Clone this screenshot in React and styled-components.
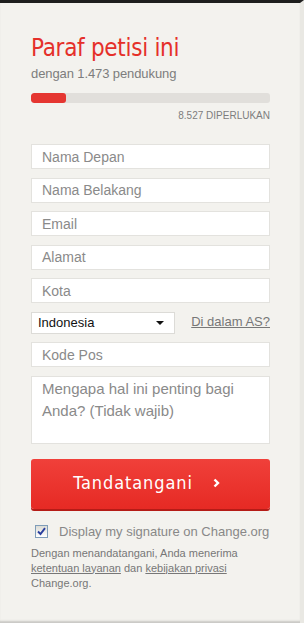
import React from 'react';
import styled, { createGlobalStyle } from 'styled-components';

const GlobalStyle = createGlobalStyle`
  html, body { margin: 0; padding: 0; background: #ffffff; }
  body { font-family: "Liberation Sans", Arial, sans-serif; }
  * { box-sizing: border-box; }
`;

const Panel = styled.div`
  width: 304px;
  height: 623px;
  background: #f3f2ee;
  border-top: 3px solid #1e1e1e;
  border-right: 4px solid #e9e8e3;
  box-shadow: inset 0 -3px 2px -1px #c9c8c4;
  padding: 30px 30px 0 31px;
  display: flex;
  flex-direction: column;
`;

const Title = styled.h1`
  margin: 0;
  font-family: "DejaVu Sans Condensed", "Liberation Sans Narrow", sans-serif;
  font-weight: normal;
  font-size: 24px;
  line-height: 30px;
  color: #e5302a;
  letter-spacing: -0.3px;
`;

const Subtitle = styled.p`
  margin: 3px 0 0;
  font-size: 13px;
  line-height: 16px;
  color: #7d7d7d;
  letter-spacing: -0.1px;
`;

const Track = styled.div`
  margin-top: 11px;
  height: 10px;
  border-radius: 3px;
  background: #e1dfdb;
  overflow: hidden;
`;

const Fill = styled.div`
  height: 100%;
  background: #e53631;
  border-radius: 3px;
`;

const Needed = styled.div`
  margin-top: 6px;
  text-align: right;
  font-size: 10px;
  line-height: 14px;
  color: #7d7d7d;
`;

const Form = styled.div`
  margin-top: 21px;
  display: flex;
  flex-direction: column;
  gap: 8.5px;
`;

const Input = styled.div`
  height: 25px;
  background: #ffffff;
  border: 1px solid #e3e2de;
  padding: 0 10px;
  display: flex;
  align-items: center;
  font-size: ${(p) => (p.$big ? 15 : 14)}px;
  color: #8a8a8a;
`;

const Area = styled(Input)`
  height: 68px;
  align-items: flex-start;
  padding-top: 1px;
  line-height: 22px;
`;

const Row = styled.div`
  display: flex;
  align-items: center;
  justify-content: space-between;
  height: 22px;
`;

const Select = styled.div`
  width: 144px;
  height: 22px;
  background: #ffffff;
  border: 1px solid #dcdbd7;
  display: flex;
  align-items: center;
  justify-content: space-between;
  padding: 0 10px 0 6px;
  font-size: 13px;
  color: #111;
`;

const Caret = styled.span`
  width: 0;
  height: 0;
  border-left: 4px solid transparent;
  border-right: 4px solid transparent;
  border-top: 4px solid #111;
`;

const Link = styled.a`
  font-size: 13px;
  color: #777;
  text-decoration: underline;
  margin-bottom: 3px;
`;

const Button = styled.button`
  margin-top: 15px;
  height: 50px;
  width: 100%;
  border: none;
  border-radius: 3px;
  background: linear-gradient(#f0403a, #e62a24);
  box-shadow: 0 2px 0 #b51c17;
  color: #ffffff;
  font-family: "Liberation Sans Narrow", "DejaVu Sans Condensed", sans-serif;
  font-size: 18px;
  letter-spacing: 0.9px;
  display: flex;
  align-items: center;
  justify-content: center;
  gap: 20px;
  padding: 0 8px 2px 0;
`;

const CheckRow = styled.label`
  margin-top: 15px;
  display: flex;
  align-items: center;
  gap: 11px;
  padding-left: 4px;
  font-size: 13px;
  color: #888;
`;

const Box = styled.span`
  width: 13px;
  height: 13px;
  border: 1px solid #7f9db9;
  background: linear-gradient(#dcdcd6, #fff);
  display: flex;
  align-items: center;
  justify-content: center;
`;

const Terms = styled.p`
  margin: 7px 0 0;
  font-size: 11px;
  line-height: 15px;
  color: #777;
`;

const TermsLink = styled.a`
  color: #777;
  text-decoration: underline;
`;

const fields = ['Nama Depan', 'Nama Belakang', 'Email', 'Alamat', 'Kota'];

export default function App() {
  const supporters = 1473;
  const goal = 10000;
  return (
    <>
      <GlobalStyle />
      <Panel>
        <Title>Paraf petisi ini</Title>
        <Subtitle>dengan 1.473 pendukung</Subtitle>
        <Track>
          <Fill style={{ width: `${(supporters / goal) * 100}%` }} />
        </Track>
        <Needed>8.527 DIPERLUKAN</Needed>
        <Form>
          {fields.map((f) => (
            <Input key={f}>{f}</Input>
          ))}
          <Row>
            <Select>
              Indonesia
              <Caret />
            </Select>
            <Link>Di dalam AS?</Link>
          </Row>
          <Input>Kode Pos</Input>
          <Area $big>
            Mengapa hal ini penting bagi
            <br />
            Anda? (Tidak wajib)
          </Area>
        </Form>
        <Button>
          Tandatangani
          <svg width="7" height="10" viewBox="0 0 7 10">
            <path d="M1.5 1.5 L5 5 L1.5 8.5" stroke="#ffffff" strokeWidth="2.4" fill="none" />
          </svg>
        </Button>
        <CheckRow>
          <Box>
            <svg width="9" height="9" viewBox="0 0 9 9">
              <path d="M1 4.5 L3.5 7 L8 1.2" stroke="#2a3f9e" strokeWidth="1.9" fill="none" />
            </svg>
          </Box>
          Display my signature on Change.org
        </CheckRow>
        <Terms>
          Dengan menandatangani, Anda menerima
          <br />
          <TermsLink>ketentuan layanan</TermsLink> dan <TermsLink>kebijakan privasi</TermsLink>
          <br />
          Change.org.
        </Terms>
      </Panel>
    </>
  );
}
